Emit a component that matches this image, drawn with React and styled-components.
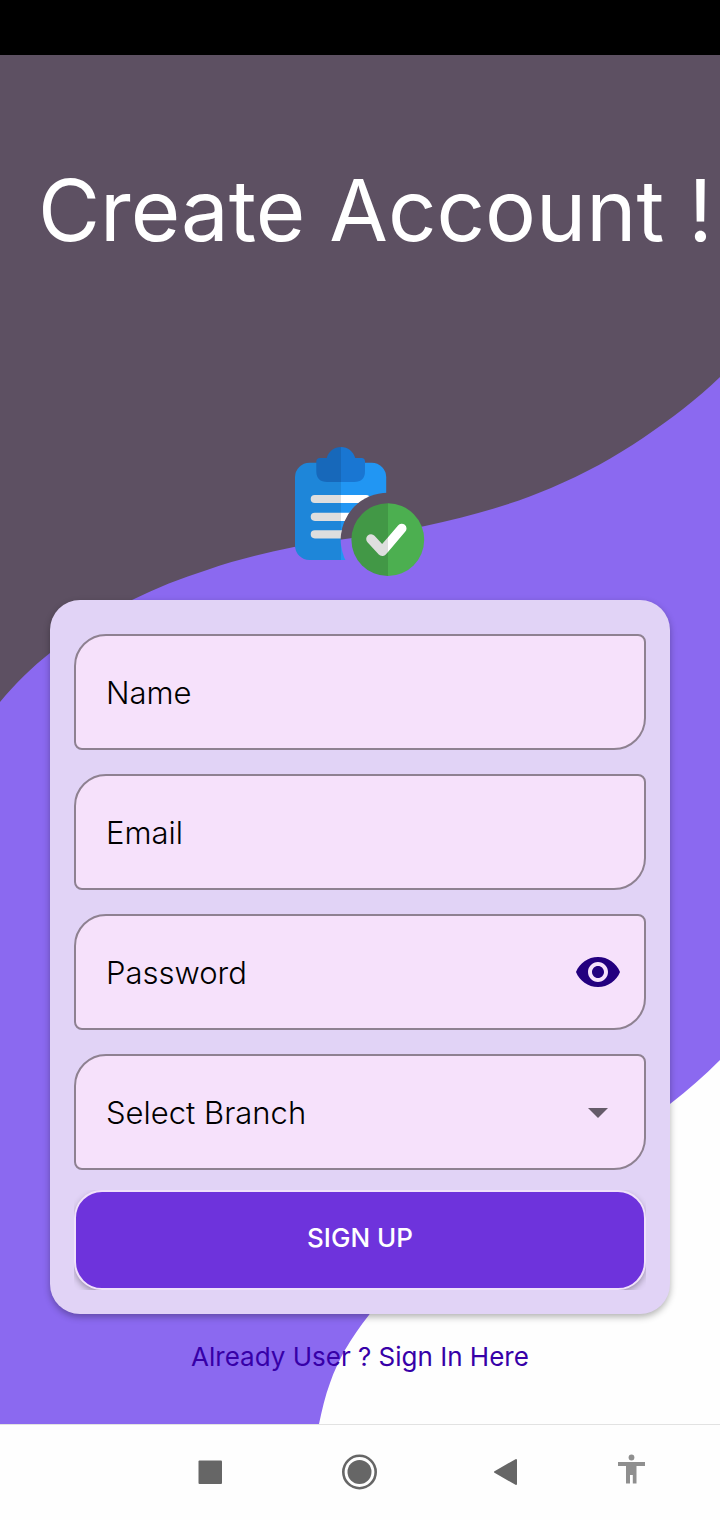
import React, { useState } from "react";
import styled, { createGlobalStyle } from "styled-components";

const GlobalStyle = createGlobalStyle`
  *, *::before, *::after { box-sizing: border-box; }
  body {
    margin: 0;
    background: #fefefe;
    font-family: Inter, "Liberation Sans", sans-serif;
  }
  button, input, select { font: inherit; margin: 0; }
`;

const Page = styled.div`
  display: flex;
  flex-direction: column;
  min-height: 100vh;
`;

const StatusBar = styled.header`
  height: 55px;
  background: #000;
`;

const Screen = styled.main`
  position: relative;
  isolation: isolate;
  flex: 1;
  display: flex;
  flex-direction: column;
  padding: 96px 50px 48px;
  overflow: hidden;
`;

const Backdrop = styled.svg`
  position: absolute;
  inset: 0;
  z-index: -1;
  width: 100%;
  height: 100%;
`;

const Title = styled.h1`
  margin: 0 -50px 176px -12px;
  color: #fff;
  font-size: 85px;
  font-weight: 400;
  line-height: 120px;
  white-space: nowrap;
`;

const Logo = styled.svg`
  align-self: center;
  width: 130px;
  height: 130px;
  margin-bottom: 23px;
`;

const Card = styled.form`
  display: flex;
  flex-direction: column;
  gap: 24px;
  padding: 34px 24px 24px;
  border-radius: 30px;
  background: #e1d3f6;
  box-shadow: 0 3px 7px rgba(0, 0, 0, 0.3);
`;

const Field = styled.div`
  display: grid;
  grid-template-columns: 1fr 48px;
  align-items: center;
  height: 116px;
  padding-right: 22px;
  border: 2px solid #8e8191;
  border-radius: 32px 8px;
  background: #f6e1fb;
`;

const controlText = `
  grid-row: 1;
  grid-column: 1 / -1;
  width: 100%;
  height: 100%;
  padding: 0 60px 0 30px;
  border: 0;
  outline: 0;
  background: transparent;
  color: #000;
  font-size: 31px;
  font-weight: 300;
`;

const TextInput = styled.input`
  ${controlText}
  &::placeholder { color: #000; opacity: 1; }
`;

const BranchSelect = styled.select`
  ${controlText}
  appearance: none;
`;

const IconButton = styled.button`
  grid-row: 1;
  grid-column: 2;
  width: 48px;
  height: 48px;
  padding: 0;
  border: 0;
  background: transparent;
  color: #23007f;
`;

const Glyph = styled.svg`
  display: block;
  width: 48px;
  height: 48px;
  fill: currentColor;
`;

const Caret = styled(Glyph)`
  grid-row: 1;
  grid-column: 2;
  color: #655b69;
  pointer-events: none;
`;

const SubmitWrap = styled.div`
  height: 100px;
  margin-top: -4px;
  overflow: hidden;
`;

const SubmitButton = styled.button`
  width: 100%;
  height: 100px;
  padding: 0 0 6px;
  border: 2px solid #f0e1fb;
  border-radius: 28px;
  background: #6e33dc;
  color: #fff;
  font-size: 26px;
  font-weight: 500;
  box-shadow: 0 3px 6px rgba(0, 0, 0, 0.3);
`;

const SignInLink = styled.a`
  align-self: center;
  margin-top: 24px;
  color: #3700a8;
  font-size: 26px;
  line-height: 38px;
  text-decoration: none;
`;

const NavBar = styled.nav`
  display: grid;
  grid-template-columns: 135fr 150fr 150fr 142fr 108fr 35fr;
  height: 96px;
  padding-bottom: 1px;
  border-top: 1px solid #e2e2e2;
  background: #fefefe;
`;

const NavButton = styled.button`
  display: grid;
  place-items: center;
  grid-column: ${(p) => p.$column};
  padding: 0;
  border: 0;
  background: transparent;
  color: ${(p) => (p.$muted ? "#8f8f8f" : "#666")};
`;

const NavIcon = styled.svg`
  width: 40px;
  height: 40px;
  fill: currentColor;
`;

function Waves() {
  return (
    <Backdrop viewBox="0 0 720 1369" preserveAspectRatio="none" aria-hidden="true">
      <rect width="720" height="1369" fill="#8b69f0" />
      <path
        fill="#5d5062"
        d="M0 0H720V322C697 344 671 364 643 383C615 402 584 419 551 433C511 450 468 462 425 471C382 480 338 484 294 492C265 498 236 505 207 515C181 523 156 533 132 545C103 559 75 577 50 598C32 612 15 629 0 647Z"
      />
      <path
        fill="#fefefe"
        d="M720 1005C704 1021 688 1035 670 1049C580 1120 440 1160 369 1260C360 1271 352 1283 345 1295C339 1306 334 1316 330 1328C325 1341 322 1355 319 1369H720Z"
      />
    </Backdrop>
  );
}

function ClipboardLogo() {
  return (
    <Logo viewBox="0 0 130 130" role="img" aria-label="Registration">
      <defs>
        <mask id="badge-gap">
          <rect width="130" height="130" fill="#fff" />
          <circle cx="92.7" cy="92.7" r="47" fill="#000" />
        </mask>
        <clipPath id="left-half"><rect width="46" height="130" /></clipPath>
        <clipPath id="right-half"><rect x="46" width="84" height="130" /></clipPath>
        <clipPath id="badge-left"><rect width="93" height="130" /></clipPath>
        <clipPath id="badge-right"><rect x="93" width="37" height="130" /></clipPath>
      </defs>
      {[
        ["left-half", "#1e86d9", "#1768ba", "#dedede"],
        ["right-half", "#2196f3", "#1976d2", "#fff"],
      ].map(([clip, board, clasp, line]) => (
        <g key={clip} clipPath={`url(#${clip})`}>
          <g mask="url(#badge-gap)">
            <rect y="15.7" width="91.2" height="97.3" rx="14.5" fill={board} />
            <path d="M19.8 52H71M19.8 69.8H71M19.8 87.3H71" stroke={line} strokeWidth="8.2" strokeLinecap="round" />
          </g>
          <path
            d="M25 11H31.7C33.5 4.5 39 0 46 0S58.3 4.5 60.3 11H66.5Q70 11 70 14.5V24Q70 35 59 35H32.3Q21.3 35 21.3 24V14.5Q21.3 11 25 11Z"
            fill={clasp}
          />
        </g>
      ))}
      {[
        ["badge-left", "#429846", "#dedede"],
        ["badge-right", "#4caf50", "#fff"],
      ].map(([clip, disc, tick]) => (
        <g key={clip} clipPath={`url(#${clip})`}>
          <circle cx="92.8" cy="92.7" r="36.4" fill={disc} />
          <path
            d="M76 92L87.3 104.2L106.7 81.5"
            fill="none"
            stroke={tick}
            strokeWidth="9.6"
            strokeLinecap="round"
            strokeLinejoin="round"
          />
        </g>
      ))}
    </Logo>
  );
}

export default function App() {
  const [visible, setVisible] = useState(false);

  return (
    <Page>
      <GlobalStyle />
      <StatusBar />
      <Screen>
        <Waves />
        <Title>Create Account !</Title>
        <ClipboardLogo />
        <Card onSubmit={(e) => e.preventDefault()}>
          <Field>
            <TextInput type="text" placeholder="Name" aria-label="Name" />
          </Field>
          <Field>
            <TextInput type="email" placeholder="Email" aria-label="Email" />
          </Field>
          <Field>
            <TextInput type={visible ? "text" : "password"} placeholder="Password" aria-label="Password" />
            <IconButton type="button" aria-label="Show password" onClick={() => setVisible(!visible)}>
              <Glyph viewBox="0 0 24 24">
                <path d="M12 4.5C7 4.5 2.73 7.61 1 12c1.73 4.39 6 7.5 11 7.5s9.27-3.11 11-7.5c-1.73-4.39-6-7.5-11-7.5zM12 17c-2.76 0-5-2.24-5-5s2.24-5 5-5 5 2.24 5 5-2.24 5-5 5zm0-8c-1.66 0-3 1.34-3 3s1.34 3 3 3 3-1.34 3-3-1.34-3-3-3z" />
              </Glyph>
            </IconButton>
          </Field>
          <Field>
            <BranchSelect aria-label="Select Branch" defaultValue="">
              <option value="">Select Branch</option>
            </BranchSelect>
            <Caret viewBox="0 0 24 24" aria-hidden="true">
              <path d="M7 10l5 5 5-5z" />
            </Caret>
          </Field>
          <SubmitWrap>
            <SubmitButton type="submit">SIGN UP</SubmitButton>
          </SubmitWrap>
        </Card>
        <SignInLink href="#sign-in">Already User ? Sign In Here</SignInLink>
      </Screen>
      <NavBar aria-label="System">
        <NavButton $column={2} aria-label="Recent apps">
          <NavIcon viewBox="0 0 40 40">
            <rect x="8.5" y="8.5" width="23.5" height="23.5" rx="1" />
          </NavIcon>
        </NavButton>
        <NavButton $column={3} aria-label="Home">
          <NavIcon viewBox="0 0 40 40">
            <circle cx="19.5" cy="20" r="16.2" fill="none" stroke="currentColor" strokeWidth="2.6" />
            <circle cx="19.5" cy="20" r="12" />
          </NavIcon>
        </NavButton>
        <NavButton $column={4} aria-label="Back">
          <NavIcon viewBox="0 0 40 40">
            <path d="M9 20L30 8V32Z" stroke="currentColor" strokeWidth="2" strokeLinejoin="round" />
          </NavIcon>
        </NavButton>
        <NavButton $column={5} $muted aria-label="Accessibility">
          <NavIcon viewBox="0 0 40 40">
            <circle cx="20.5" cy="5.5" r="2.9" />
            <path d="M7 10H34V14H25.5V31.5H21.8V23H19V31.5H15V14H7Z" />
          </NavIcon>
        </NavButton>
      </NavBar>
    </Page>
  );
}
